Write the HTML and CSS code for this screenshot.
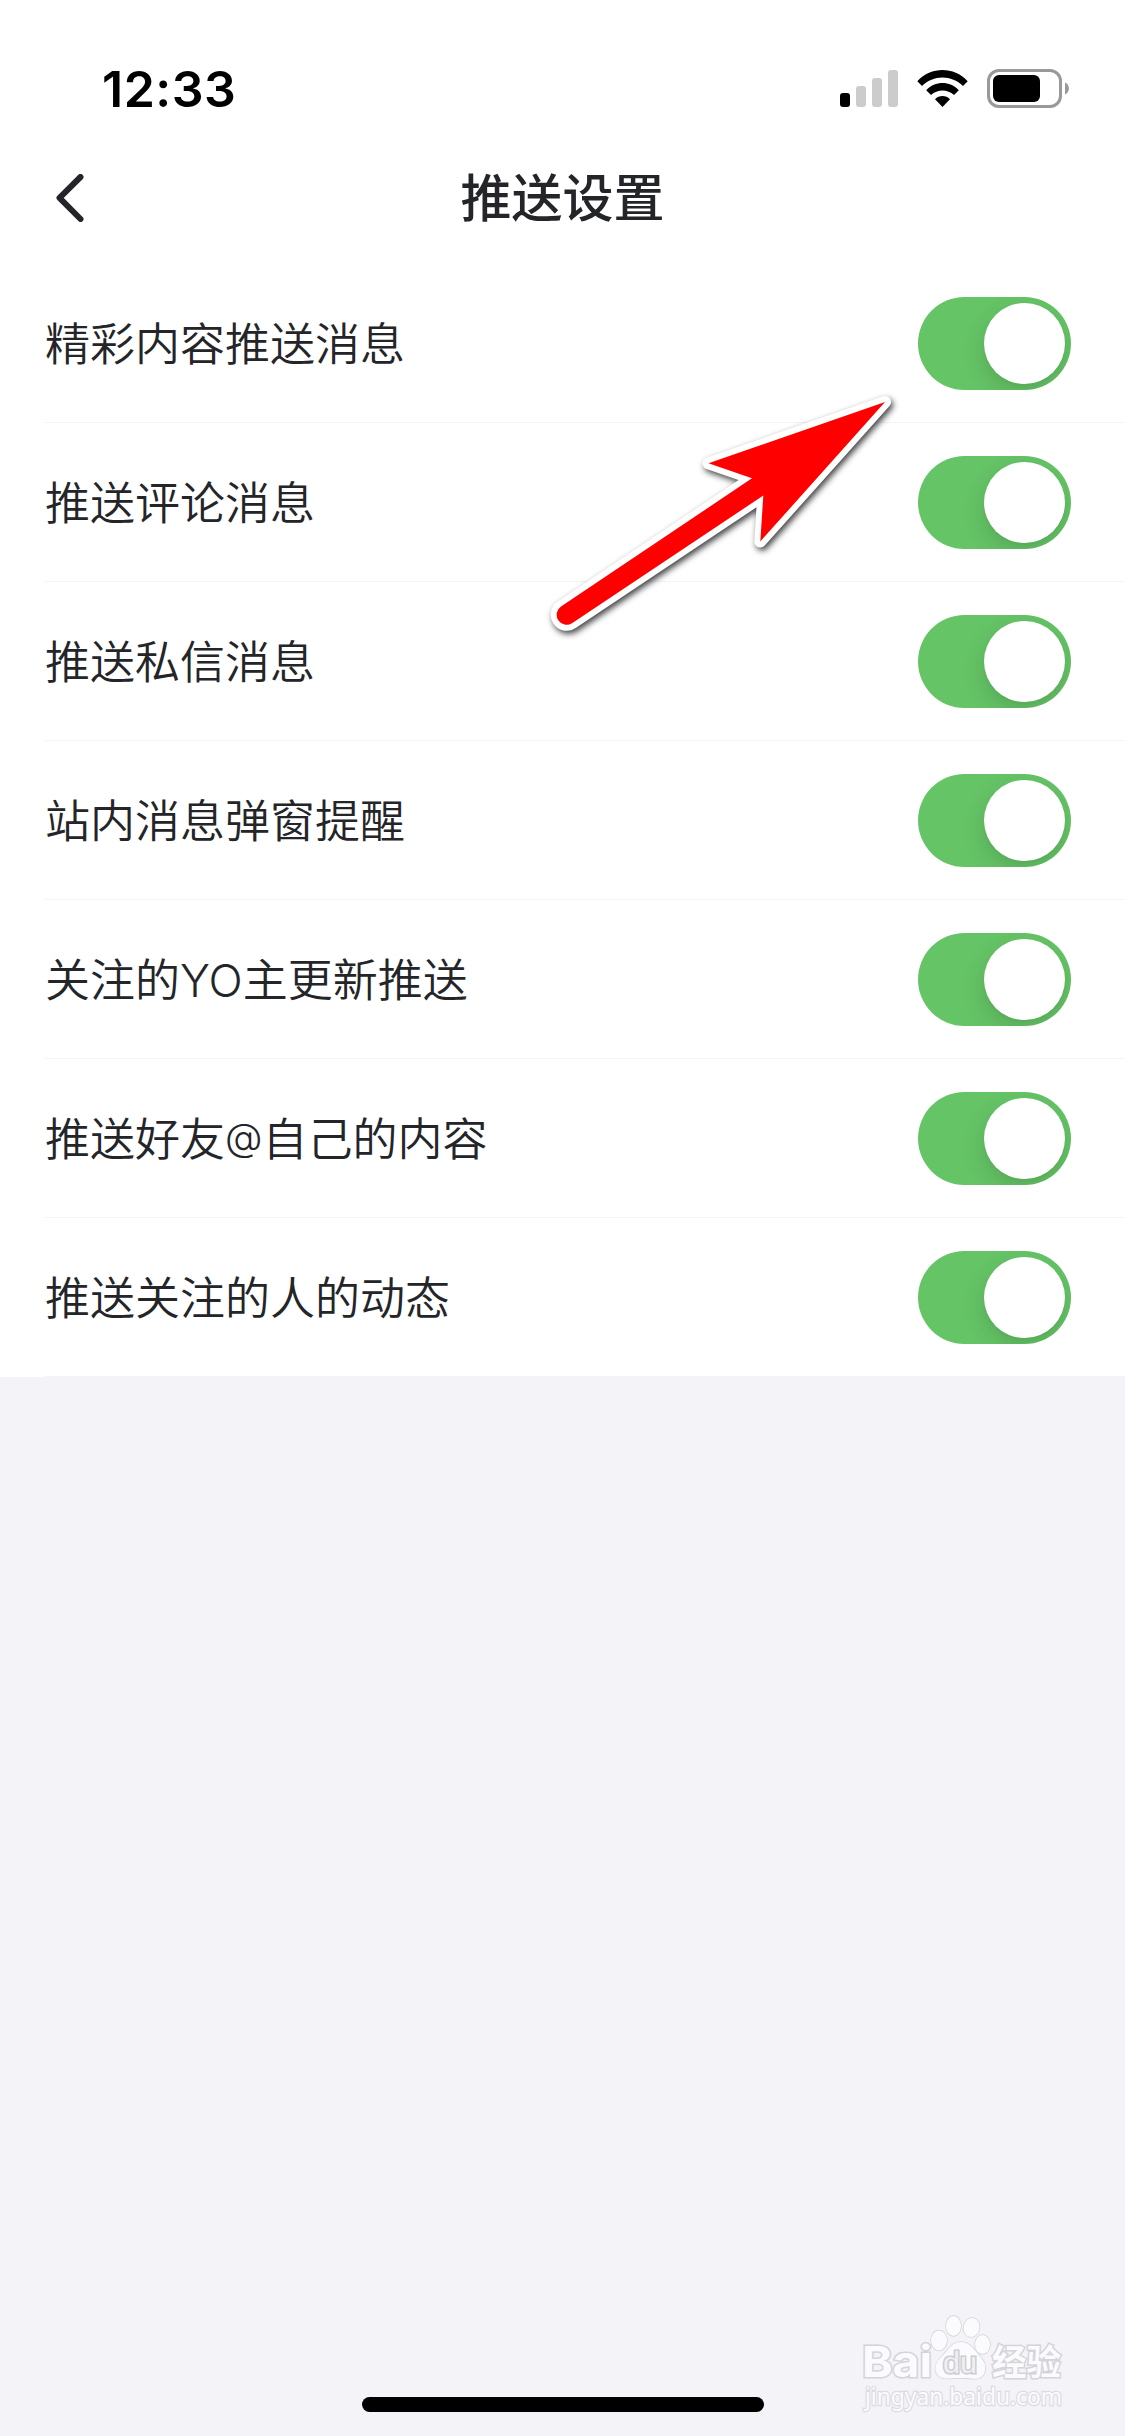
FILE: index.html
```html
<!DOCTYPE html>
<html lang="zh-CN">
<head>
    <meta charset="UTF-8">
    <meta name="viewport" content="width=device-width, initial-scale=1.0">
    <title>推送设置</title>
    <link rel="stylesheet" href="styles.css">
</head>
<body>
    <div class="status-bar">
        <span class="time">12:33</span>
        <div class="status-icons">
            <svg class="signal" width="58" height="37" viewBox="0 0 58 37">
                <rect x="0" y="23" width="10" height="14" rx="3"/>
                <rect class="off" x="16" y="16" width="10" height="21" rx="3"/>
                <rect class="off" x="32" y="8" width="10" height="29" rx="3"/>
                <rect class="off" x="48" y="0" width="10" height="37" rx="3"/>
            </svg>
            <svg class="wifi" width="51" height="37" viewBox="0 0 51 37">
                <path d="M0.3 11.2C14.2 -3.6 36.8 -3.6 50.7 11.2L46 16.1C34.5 4.6 16.5 4.6 5 16.1Z"/>
                <path d="M9.2 20.2C18.2 10.7 32.8 10.7 41.8 20.2L37 25.1C30.5 18.9 20.5 18.9 14 25.1Z"/>
                <path d="M18 29.2C22.2 24.9 28.8 24.9 33 29.2L25.5 37Z"/>
            </svg>
            <svg class="battery" width="83" height="39" viewBox="0 0 83 39">
                <rect x="1.5" y="1.5" width="72" height="36" rx="10.5" fill="none" stroke="#999" stroke-width="3"/>
                <rect x="6" y="6" width="47" height="27" rx="6"/>
                <path d="M78 13.5C83.2 15.5 83.2 23.5 78 25.5Z" fill="#999"/>
            </svg>
        </div>
    </div>

    <header class="nav-bar">
        <svg class="back" width="28" height="48" viewBox="0 0 28 48">
            <path d="M24.5 3L3.5 23.8L24.5 45"/>
        </svg>
        <h1>推送设置</h1>
    </header>

    <ul class="settings">
        <li><span>精彩内容推送消息</span><i class="switch"></i></li>
        <li><span>推送评论消息</span><i class="switch"></i></li>
        <li><span>推送私信消息</span><i class="switch"></i></li>
        <li><span>站内消息弹窗提醒</span><i class="switch"></i></li>
        <li><span>关注的<b class="latin">YO</b>主更新推送</span><i class="switch"></i></li>
        <li><span>推送好友<b class="latin at">@</b>自己的内容</span><i class="switch"></i></li>
        <li><span>推送关注的人的动态</span><i class="switch"></i></li>
    </ul>

    <!-- arrow pointing at the first switch -->
    <svg class="arrow" width="390" height="280" viewBox="0 0 390 280">
        <path class="outline" d="M355 32L178.5 93.3L222 108.3L31 236.5A10 10 0 0 0 42 253.2L233.3 125.5L230.3 171.5Z"/>
        <path class="fill" d="M355 32L178.5 93.3L222 108.3L31 236.5A10 10 0 0 0 42 253.2L233.3 125.5L230.3 171.5Z"/>
    </svg>

    <svg class="watermark" width="250" height="146" viewBox="0 0 250 146">
        <text class="logo" x="22" y="87" textLength="70" lengthAdjust="spacingAndGlyphs">Bai</text>
        <ellipse cx="99" cy="50.500" rx="8" ry="10"/>
        <ellipse cx="113.500" cy="36" rx="7.500" ry="10"/>
        <ellipse cx="131.500" cy="37.500" rx="8" ry="9.500" transform="rotate(12 131.500 37.500)"/>
        <ellipse cx="142.500" cy="54.500" rx="7.500" ry="9.500"/>
        <path d="M121 52C112 52 109 59 103 65C97 71 94 76 96 82C99 91 110 88 121 88C132 88 142 92 145 81C147 74 142 69 138 64C133 58 129 52 121 52Z"/>
        <text class="du" x="103" y="83" textLength="34" lengthAdjust="spacingAndGlyphs">du</text>
        <text class="cn" x="152" y="85" textLength="69" lengthAdjust="spacingAndGlyphs">经验</text>
        <text class="url" x="25" y="115" textLength="197" lengthAdjust="spacingAndGlyphs">jingyan.baidu.com</text>
    </svg>

    <div class="home-indicator"></div>
</body>
</html>
```

FILE: styles.css
```css
* {
    box-sizing: border-box;
}

body {
    margin: 0;
    position: relative;
    height: 2436px;
    background-color: #f3f3f8;
    color: #242529;
    font-family: "Noto Sans CJK SC", sans-serif;
    overflow: hidden;
}

.status-bar {
    display: flex;
    justify-content: space-between;
    align-items: center;
    height: 132px;
    padding: 45px 55px 0 102px;
    background-color: white;
    color: black;
}

.time {
    font-family: Inter, sans-serif;
    font-size: 50px;
    font-weight: 600;
    line-height: 60px;
    letter-spacing: 0.5px;
}

.status-icons {
    display: flex;
    align-items: center;
}

.signal .off {
    fill: #ccc;
}

.wifi {
    margin-left: 19px;
    margin-right: 19px;
}

.nav-bar {
    display: grid;
    grid-template-columns: 100px 1fr 100px;
    align-items: center;
    height: 132px;
    padding: 0 56px;
    background-color: white;
}

.back path {
    fill: none;
    stroke: #242529;
    stroke-width: 6;
    stroke-linecap: round;
    stroke-linejoin: round;
}

h1 {
    margin: 0;
    padding-bottom: 6px;
    font-size: 51px;
    font-weight: 500;
    line-height: 70px;
    text-align: center;
}

.settings {
    margin: 0;
    padding: 0 0 0 45px;
    list-style: none;
    background-color: white;
}

.settings li {
    display: flex;
    justify-content: space-between;
    align-items: center;
    height: 159px;
    padding: 1px 54px 0 0;
    border-bottom: 1px solid #f3f3f8;
    font-size: 45px;
    font-weight: 350;
    line-height: 64px;
}

.settings span {
    height: 64px;
    margin-bottom: 4px;
    white-space: nowrap;
}

.latin {
    font-family: Inter, sans-serif;
    font-weight: 350;
    line-height: 1;
}

.at {
    position: relative;
    top: -5px;
    font-size: 38.5px;
}

.switch {
    width: 153px;
    height: 93px;
    padding: 6px;
    border-radius: 47px;
    background-color: #65c466;
    overflow: hidden;
}

.switch::before {
    content: "";
    display: block;
    width: 81px;
    height: 81px;
    margin-left: auto;
    border-radius: 50%;
    background-color: white;
    box-shadow: 0 9px 24px rgba(0, 0, 0, 0.14), 0 3px 3px rgba(0, 0, 0, 0.02);
}

.arrow {
    position: absolute;
    left: 530px;
    top: 370px;
}

.arrow .outline {
    fill: white;
    stroke: white;
    stroke-width: 12;
    stroke-linejoin: round;
    filter: drop-shadow(2px 3px 3px rgba(0, 0, 0, 0.75));
}

.arrow .fill {
    fill: red;
}

.watermark {
    position: absolute;
    left: 840px;
    top: 2290px;
    fill: #fbfbfd;
    stroke: #d4d4d8;
    stroke-width: 1.5;
    paint-order: stroke;
    font-family: "Liberation Sans", sans-serif;
}

.watermark .logo {
    font-family: Inter, sans-serif;
    font-size: 43px;
    font-weight: 700;
    stroke-width: 3;
}

.watermark .du {
    fill: #f0f0f4;
    font-size: 29px;
    stroke: #ccccd0;
    stroke-width: 3;
}

.watermark .cn {
    font-family: "Noto Sans CJK SC", sans-serif;
    font-size: 35px;
    font-weight: bold;
    stroke-width: 3;
}

.watermark .url {
    font-family: "Noto Sans", sans-serif;
    font-size: 23px;
    stroke: #dddde1;
    stroke-width: 2.5;
}

.home-indicator {
    position: absolute;
    left: 362px;
    bottom: 24px;
    width: 402px;
    height: 15px;
    border-radius: 8px;
    background-color: black;
}
```
